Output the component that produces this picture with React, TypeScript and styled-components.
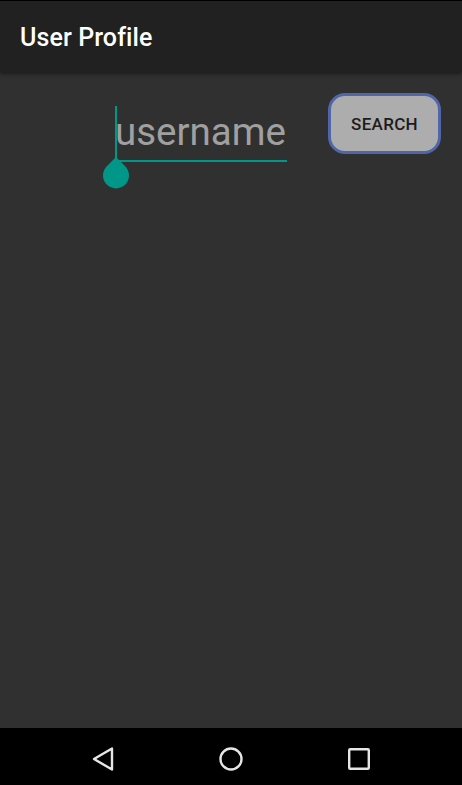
import React from "react";
import styled, { createGlobalStyle } from "styled-components";

const Global = createGlobalStyle`
  html, body { margin: 0; padding: 0; background: #000; }
  body { font-family: Roboto, "Noto Sans", sans-serif; }
  #root { height: 785px; }
  * { box-sizing: border-box; }
`;

const Screen = styled.div`
  width: 462px;
  height: 785px;
  display: flex;
  flex-direction: column;
  background: #303030;
  border-top: 1px solid #000;
  overflow: hidden;
`;

const AppBar = styled.header`
  height: 71px;
  flex: none;
  background: #212121;
  display: flex;
  align-items: center;
  padding: 0 0 0 20px;
  box-shadow: 0 2px 4px rgba(0, 0, 0, 0.45);
  position: relative;
  z-index: 1;
`;

const Title = styled.h1`
  margin: 0;
  font-family: Roboto, sans-serif;
  font-weight: 500;
  font-size: 25px;
  color: #ffffff;
  letter-spacing: 0.1px;
  margin-top: 2px;
`;

const Content = styled.main`
  flex: 1;
  display: flex;
  align-items: flex-start;
  padding: 21px 21px 0 115px;
  gap: 41px;
`;

const Field = styled.div`
  position: relative;
  width: 172px;
  margin-top: 17px;
  padding-bottom: 6px;
  border-bottom: 2px solid #009688;
`;

const Placeholder = styled.div`
  font-family: Roboto, sans-serif;
  font-size: 38.5px;
  line-height: 44px;
  color: #a0a0a0;
  white-space: nowrap;
`;

const Cursor = styled.div`
  position: absolute;
  left: 0;
  top: -4px;
  width: 2px;
  height: 58px;
  background: #009688;
`;

const Handle = styled.svg`
  position: absolute;
  left: -12px;
  top: 47px;
`;

const SearchButton = styled.button`
  width: 113px;
  height: 61px;
  flex: none;
  border: 3px solid #5066a8;
  border-radius: 17px;
  background: #adadad;
  color: #1c1c1c;
  font-family: Roboto, sans-serif;
  font-weight: 500;
  font-size: 17px;
  letter-spacing: 0.3px;
  padding: 0;
  cursor: pointer;
`;

const NavBar = styled.nav`
  height: 57px;
  flex: none;
  background: #000;
  display: flex;
  align-items: center;
  justify-content: center;
  gap: 104px;
  padding-top: 4px;
`;

const NavIcon = styled.svg`
  width: 24px;
  height: 24px;
  display: block;
`;

export default function App() {
  return (
    <>
      <Global />
      <Screen>
        <AppBar>
          <Title>User Profile</Title>
        </AppBar>
        <Content>
          <Field>
            <Placeholder>username</Placeholder>
            <Cursor />
            <Handle width="26" height="32" viewBox="0 0 26 32">
              <path
                d="M13 0 L22.19 9.21 A13 13 0 1 1 3.81 9.21 Z"
                fill="#009688"
              />
            </Handle>
          </Field>
          <SearchButton>SEARCH</SearchButton>
        </Content>
        <NavBar>
          <NavIcon viewBox="0 0 24 24">
            <path
              d="M21 1.5 L21 22.5 L3 12 Z"
              fill="none"
              stroke="#e6e6e6"
              strokeWidth="2.4"
              strokeLinejoin="round"
            />
          </NavIcon>
          <NavIcon viewBox="0 0 24 24">
            <circle cx="12" cy="12" r="10.5" fill="none" stroke="#e6e6e6" strokeWidth="2.4" />
          </NavIcon>
          <NavIcon viewBox="0 0 24 24">
            <rect x="2.2" y="2.2" width="19.6" height="19.6" rx="1" fill="none" stroke="#e6e6e6" strokeWidth="2.4" />
          </NavIcon>
        </NavBar>
      </Screen>
    </>
  );
}
